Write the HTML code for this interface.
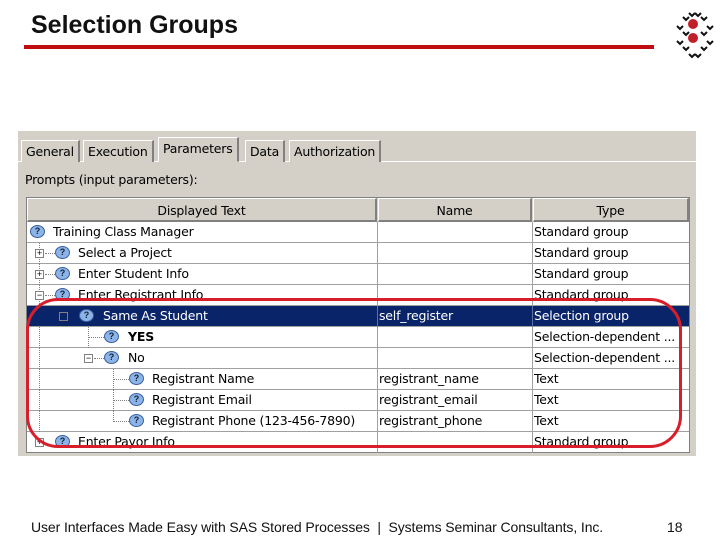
<!DOCTYPE html>
<html><head><meta charset="utf-8"><style>
*{margin:0;padding:0;box-sizing:border-box}
body{width:720px;height:540px;background:#fff;position:relative;overflow:hidden;font-family:"Liberation Sans",sans-serif}
.a{position:absolute}
.t{font-family:"DejaVu Sans","Liberation Sans",sans-serif;font-size:12.5px;color:#000;white-space:nowrap;letter-spacing:-0.2px}
.row{position:absolute;left:27px;width:662px;height:21px;border-bottom:1px solid #a0a0a0;background:#fff}
.c{position:absolute;top:0;height:21px;line-height:20px;border-right:1px solid #a0a0a0}
.ic{position:absolute;width:15px;height:13px;border-radius:50%;background:#8cb4e8;border:1px solid #3a5f9f;font-size:9px;line-height:11px;text-align:center;color:#123;font-weight:bold}
.bx{position:absolute;width:9px;height:9px;border:1px solid #808080;background:#fff;font-size:9px;line-height:7px;text-align:center;color:#000}
.dl{position:absolute;border-left:1px dotted #808080}
.dh{position:absolute;border-top:1px dotted #808080}
.tab{position:absolute;top:140px;height:22px;background:#d4d0c8;border:1px solid #fff;border-right:2px solid #808080;border-bottom:none;font-family:"DejaVu Sans",sans-serif;font-size:12.5px;line-height:21px;padding:0 4px;letter-spacing:-0.2px}
</style></head><body>
<div class="a" style="left:31px;top:11px;font-size:25px;font-weight:bold;color:#111">Selection Groups</div>
<div class="a" style="left:24px;top:45px;width:630px;height:4px;background:#c00d12"></div>
<svg class="a" style="left:670px;top:4px" width="50" height="58" viewBox="0 0 50 58">
<g fill="none" stroke="#111" stroke-width="2">
<path d="M13 13l3 3 3-3M19 9l3 3 3-3M25 9l3 3 3-3M31 13l3 3 3-3M7 22l3 3 3-3M37 22l3 3 3-3M13 28l3 3 3-3M31 28l3 3 3-3M7 37l3 3 3-3M37 37l3 3 3-3M13 43l3 3 3-3M31 43l3 3 3-3M19 50l3 3 3-3M25 50l3 3 3-3"/>
</g>
<circle cx="23" cy="20" r="5" fill="#c0202a"/><circle cx="23" cy="34" r="5" fill="#c0202a"/>
</svg>
<div class="a" style="left:18px;top:131px;width:678px;height:325px;background:#d4d0c8"></div>
<div class="a" style="left:18px;top:161px;width:678px;height:1px;background:#fff"></div>
<div class="tab" style="left:21px">General</div>
<div class="tab" style="left:83px">Execution</div>
<div class="tab" style="left:158px;top:137px;height:25px;border-bottom:1px solid #d4d0c8;padding-top:0">Parameters</div>
<div class="tab" style="left:245px">Data</div>
<div class="tab" style="left:289px">Authorization</div>
<div class="a t" style="left:25px;top:172px">Prompts (input parameters):</div>
<div class="a" style="left:26px;top:197px;width:664px;height:256px;border:1px solid #808080;background:#fff"></div>
<div class="a" style="left:27px;top:198px;width:662px;height:24px;background:#d4d0c8"></div>
<div class="a t" style="left:27px;top:198px;width:350px;height:24px;line-height:23px;text-align:center;border:1px solid #fff;border-right:2px solid #808080;border-bottom:2px solid #808080">Displayed Text</div>
<div class="a t" style="left:378px;top:198px;width:154px;height:24px;line-height:23px;text-align:center;border:1px solid #fff;border-right:2px solid #808080;border-bottom:2px solid #808080">Name</div>
<div class="a t" style="left:533px;top:198px;width:156px;height:24px;line-height:23px;text-align:center;border:1px solid #fff;border-right:2px solid #808080;border-bottom:2px solid #808080">Type</div>

<div class="row" style="top:222px"><div class="c" style="left:0;width:351px"></div><div class="c" style="left:351px;width:155px"></div><div class="ic" style="left:3px;top:3px">?</div><div class="a t" style="left:26px;top:2px">Training Class Manager</div><div class="a t" style="left:507px;top:2px">Standard group</div></div>
<div class="row" style="top:243px"><div class="c" style="left:0;width:351px"></div><div class="c" style="left:351px;width:155px"></div><div class="dl" style="left:12px;top:0;height:21px"></div><div class="dh" style="left:18px;top:10px;width:10px"></div><div class="bx" style="left:8px;top:6px">+</div><div class="ic" style="left:28px;top:3px">?</div><div class="a t" style="left:51px;top:2px">Select a Project</div><div class="a t" style="left:507px;top:2px">Standard group</div></div>
<div class="row" style="top:264px"><div class="c" style="left:0;width:351px"></div><div class="c" style="left:351px;width:155px"></div><div class="dl" style="left:12px;top:0;height:21px"></div><div class="dh" style="left:18px;top:10px;width:10px"></div><div class="bx" style="left:8px;top:6px">+</div><div class="ic" style="left:28px;top:3px">?</div><div class="a t" style="left:51px;top:2px">Enter Student Info</div><div class="a t" style="left:507px;top:2px">Standard group</div></div>
<div class="row" style="top:285px"><div class="c" style="left:0;width:351px"></div><div class="c" style="left:351px;width:155px"></div><div class="dl" style="left:12px;top:0;height:21px"></div><div class="dh" style="left:18px;top:10px;width:10px"></div><div class="bx" style="left:8px;top:6px">−</div><div class="ic" style="left:28px;top:3px">?</div><div class="a t" style="left:51px;top:2px">Enter Registrant Info</div><div class="a t" style="left:507px;top:2px">Standard group</div></div>
<div class="row" style="top:306px;background:#0a246a"><div class="c" style="left:0;width:351px;border-color:#6070a0"></div><div class="c" style="left:351px;width:155px;border-color:#6070a0"></div><div class="bx" style="left:32px;top:6px;background:#0a246a"></div><div class="ic" style="left:52px;top:3px">?</div><div class="a t" style="left:76px;top:2px;color:#fff">Same As Student</div><div class="a t" style="left:352px;top:2px;color:#fff">self_register</div><div class="a t" style="left:507px;top:2px;color:#fff">Selection group</div></div>
<div class="row" style="top:327px"><div class="c" style="left:0;width:351px"></div><div class="c" style="left:351px;width:155px"></div><div class="dl" style="left:12px;top:0;height:21px"></div><div class="dl" style="left:61px;top:0;height:21px"></div><div class="dh" style="left:61px;top:10px;width:16px"></div><div class="ic" style="left:77px;top:3px">?</div><div class="a t" style="left:101px;top:2px;font-weight:bold">YES</div><div class="a t" style="left:507px;top:2px">Selection-dependent ...</div></div>
<div class="row" style="top:348px"><div class="c" style="left:0;width:351px"></div><div class="c" style="left:351px;width:155px"></div><div class="dl" style="left:12px;top:0;height:21px"></div><div class="dh" style="left:67px;top:10px;width:10px"></div><div class="bx" style="left:57px;top:6px">−</div><div class="ic" style="left:77px;top:3px">?</div><div class="a t" style="left:101px;top:2px">No</div><div class="a t" style="left:507px;top:2px">Selection-dependent ...</div></div>
<div class="row" style="top:369px"><div class="c" style="left:0;width:351px"></div><div class="c" style="left:351px;width:155px"></div><div class="dl" style="left:12px;top:0;height:21px"></div><div class="dl" style="left:86px;top:0;height:21px"></div><div class="dh" style="left:86px;top:10px;width:16px"></div><div class="ic" style="left:102px;top:3px">?</div><div class="a t" style="left:125px;top:2px">Registrant Name</div><div class="a t" style="left:352px;top:2px">registrant_name</div><div class="a t" style="left:507px;top:2px">Text</div></div>
<div class="row" style="top:390px"><div class="c" style="left:0;width:351px"></div><div class="c" style="left:351px;width:155px"></div><div class="dl" style="left:12px;top:0;height:21px"></div><div class="dl" style="left:86px;top:0;height:21px"></div><div class="dh" style="left:86px;top:10px;width:16px"></div><div class="ic" style="left:102px;top:3px">?</div><div class="a t" style="left:125px;top:2px">Registrant Email</div><div class="a t" style="left:352px;top:2px">registrant_email</div><div class="a t" style="left:507px;top:2px">Text</div></div>
<div class="row" style="top:411px"><div class="c" style="left:0;width:351px"></div><div class="c" style="left:351px;width:155px"></div><div class="dl" style="left:12px;top:0;height:21px"></div><div class="dl" style="left:86px;top:0;height:11px"></div><div class="dh" style="left:86px;top:10px;width:16px"></div><div class="ic" style="left:102px;top:3px">?</div><div class="a t" style="left:125px;top:2px">Registrant Phone (123-456-7890)</div><div class="a t" style="left:352px;top:2px">registrant_phone</div><div class="a t" style="left:507px;top:2px">Text</div></div>
<div class="row" style="top:432px;height:20px;border-bottom:none"><div class="c" style="left:0;width:351px"></div><div class="c" style="left:351px;width:155px"></div><div class="bx" style="left:8px;top:6px">+</div><div class="ic" style="left:28px;top:3px">?</div><div class="a t" style="left:51px;top:2px">Enter Payor Info</div><div class="a t" style="left:507px;top:2px">Standard group</div></div>

<div class="a" style="left:26px;top:298px;width:656px;height:150px;border:3px solid #d81e2a;border-radius:32px"></div>

<div class="a" style="left:31px;top:519px;font-size:14px;color:#111;letter-spacing:-0.1px;white-space:nowrap">User Interfaces Made Easy with SAS Stored Processes &nbsp;| &nbsp;Systems Seminar Consultants, Inc.</div>
<div class="a" style="left:667px;top:519px;font-size:14px;color:#111">18</div>
</body></html>
